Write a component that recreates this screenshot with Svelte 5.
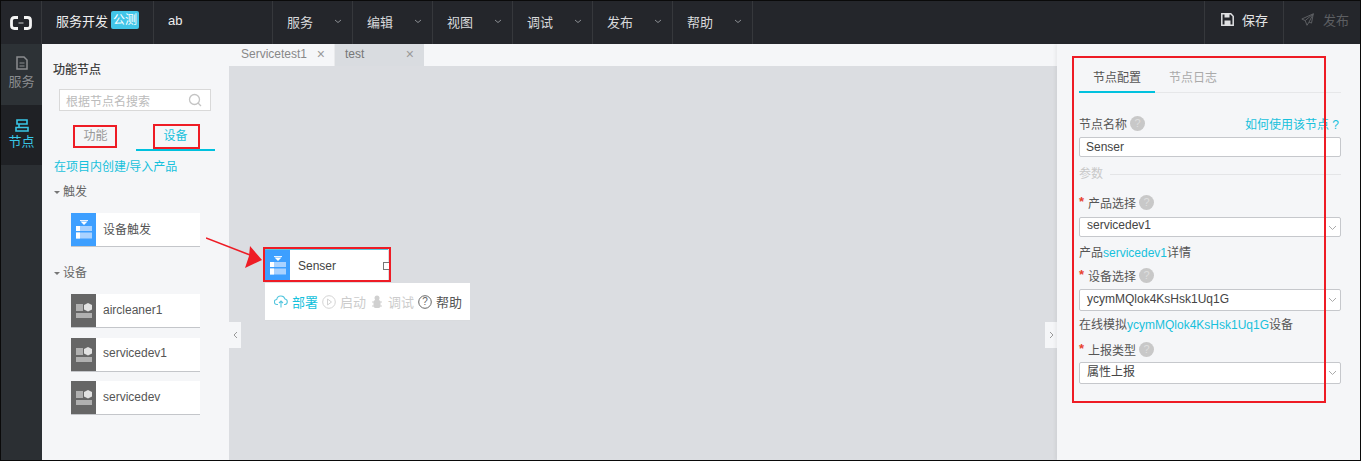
<script>
  const menus = ["服务", "编辑", "视图", "调试", "发布", "帮助"];
  const devices = ["aircleaner1", "servicedev1", "servicedev"];
</script>

{#snippet triggerIcon()}
  <svg width="16" height="19" viewBox="0 0 16 19">
    <rect x="4" y="0" width="8" height="1" fill="#e8f2ff" />
    <path d="M4.500 1.500h7L8 5z" fill="#fff" />
    <rect x="0" y="6" width="16" height="5" fill="#a9d2ff" />
    <rect x="0" y="12.500" width="16" height="6" fill="#a9d2ff" />
    <rect x="0" y="6" width="4" height="5" fill="#fff" />
    <rect x="0" y="12.500" width="4" height="6" fill="#fff" />
  </svg>
{/snippet}

{#snippet deviceIcon()}
  <svg width="16" height="15" viewBox="0 0 16 15">
    <rect x="0" y="1" width="7" height="7" fill="#b0b0b0" />
    <path d="M12 0l4 2v4.500l-4 2-4-2V2z" fill="#e2e2e2" />
    <rect x="0" y="10" width="16" height="5" fill="#b0b0b0" />
  </svg>
{/snippet}

{#snippet help()}
  <span class="help">?</span>
{/snippet}

{#snippet chevron()}
  <svg class="sel-arrow" width="9" height="6" viewBox="0 0 9 6"><path d="M1 1l3.500 3.500L8 1" fill="none" stroke="#aaa" /></svg>
{/snippet}

<div class="page">
  <header class="topbar">
    <div class="logo">
      <svg width="22" height="14" viewBox="0 0 22 14">
        <path d="M8 1.500H4.500Q1.500 1.500 1.500 4.500v5q0 3 3 3H8M14 1.500h3.500q3 0 3 3v5q0 3-3 3H14" fill="none" stroke="#f4f4f4" stroke-width="2.800" />
        <rect x="8.500" y="6.200" width="5" height="1.600" fill="#8d8f92" />
      </svg>
    </div>
    <div class="brand"><span>服务开发</span><span class="beta">公测</span></div>
    <div class="project">ab</div>
    <nav class="menus">
      {#each menus as m}
        <div class="menu">
          <span>{m}</span>
          <svg width="8" height="5" viewBox="0 0 8 5"><path d="M1 1l3 2.500L7 1" fill="none" stroke="#8a8d92" /></svg>
        </div>
      {/each}
    </nav>
    <div class="action save">
      <svg width="13" height="13" viewBox="0 0 13 13">
        <path d="M.8.800h9l2.400 2.400v9H.8z" fill="none" stroke="#dfe0e2" stroke-width="1.500" />
        <rect x="3.500" y="1" width="5" height="3.500" fill="#dfe0e2" />
        <rect x="3.500" y="7.500" width="6" height="4.500" fill="#dfe0e2" />
      </svg>
      <span>保存</span>
    </div>
    <div class="action publish">
      <svg width="13" height="13" viewBox="0 0 13 13"><path d="M12.300.8L.8 6l3.400 1.600L6 12.300l2-3.200 2.500 1z M12.300.8L4.200 7.600 M12.300.8L8 9.100" fill="none" stroke="#5c5e62" /></svg>
      <span>发布</span>
    </div>
  </header>

  <div class="body">
    <aside class="rail">
      <div class="rail-item">
        <svg width="12" height="14" viewBox="0 0 12 14">
          <path d="M1 1h7l3 3v9H1z" fill="none" stroke="#8a8c8f" stroke-width="1.500" />
          <path d="M3.500 7h5M3.500 10h5" stroke="#8a8c8f" />
        </svg>
        <span>服务</span>
      </div>
      <div class="rail-item active">
        <svg width="14" height="13" viewBox="0 0 14 13">
          <path d="M2 1h10v4H2zM1 8.500h12v3.500H1zM4 5v3.500" fill="none" stroke="#39c6e6" stroke-width="1.600" />
        </svg>
        <span>节点</span>
      </div>
    </aside>

    <section class="nodes">
      <h3>功能节点</h3>
      <div class="search">
        <span>根据节点名搜索</span>
        <svg width="14" height="14" viewBox="0 0 14 14">
          <circle cx="6.500" cy="6.500" r="5" fill="none" stroke="#c4c4c4" stroke-width="1.300" />
          <path d="M10 10l3 3" stroke="#c4c4c4" stroke-width="1.300" />
        </svg>
      </div>
      <div class="node-tabs">
        <div class="node-tab">功能</div>
        <div class="node-tab on">设备</div>
      </div>
      <a class="create">在项目内创建/导入产品</a>

      <div class="group-title first"><i></i>触发</div>
      <div class="node-card">
        <div class="card-icon blue">{@render triggerIcon()}</div>
        <span>设备触发</span>
      </div>

      <div class="group-title second"><i></i>设备</div>
      <div class="device-list">
        {#each devices as d}
          <div class="node-card">
            <div class="card-icon grey">{@render deviceIcon()}</div>
            <span>{d}</span>
          </div>
        {/each}
      </div>
    </section>

    <main class="workspace">
      <div class="tabs">
        <div class="tab current"><span>Servicetest1</span><em>×</em></div>
        <div class="tab"><span>test</span><em>×</em></div>
      </div>
      <div class="canvas">
        <div class="fold left"><svg width="5" height="8" viewBox="0 0 5 8"><path d="M4 1L1 4l3 3" fill="none" stroke="#999" /></svg></div>
        <div class="fold right"><svg width="5" height="8" viewBox="0 0 5 8"><path d="M1 1l3 3-3 3" fill="none" stroke="#999" /></svg></div>

        <div class="flow-node">
          <div class="card-icon blue">{@render triggerIcon()}</div>
          <span>Senser</span>
          <i class="port"></i>
        </div>
        <div class="node-actions">
          <span class="act on">
            <svg width="14" height="13" viewBox="0 0 14 13"><path d="M4 9.500H3a2.500 2.500 0 0 1-.3-5 4.300 4.300 0 0 1 8.300-.5A2.800 2.800 0 0 1 11 9.500h-1M7 12.500V6M5 8l2-2 2 2" fill="none" stroke="#55c6de" stroke-width="1.100" /></svg>
            部署
          </span>
          <span class="act off">
            <svg width="14" height="14" viewBox="0 0 14 14"><circle cx="7" cy="7" r="6.300" fill="none" stroke="#d4d4d4" /><path d="M5.500 4l4 3-4 3z" fill="none" stroke="#d4d4d4" /></svg>
            启动
          </span>
          <span class="act off">
            <svg width="14" height="13" viewBox="0 0 14 13"><circle cx="7" cy="3" r="2.500" fill="#d0d0d0" /><rect x="3.500" y="5" width="7" height="8" rx="2" fill="#d0d0d0" /><path d="M2 7h10M2 11h10" stroke="#d0d0d0" /></svg>
            调试
          </span>
          <span class="act">
            <svg width="14" height="14" viewBox="0 0 14 14"><circle cx="7" cy="7" r="6.300" fill="none" stroke="#666" /><text x="7" y="10.300" text-anchor="middle" font-size="10" fill="#666" font-family="Liberation Sans">?</text></svg>
            帮助
          </span>
        </div>
      </div>
    </main>

    <aside class="config">
      <div class="config-tabs">
        <div class="config-tab on">节点配置</div>
        <div class="config-tab">节点日志</div>
      </div>

      <div class="label-row name-row">
        <label>节点名称</label>{@render help()}
        <a class="howto">如何使用该节点 ?</a>
      </div>
      <div class="input name">Senser</div>

      <div class="divider"><span>参数</span><hr /></div>

      <div class="label-row product"><b>*</b><label>产品选择</label>{@render help()}</div>
      <div class="input select product-select">servicedev1{@render chevron()}</div>
      <p class="hint product-hint">产品<a>servicedev1</a>详情</p>

      <div class="label-row device"><b>*</b><label>设备选择</label>{@render help()}</div>
      <div class="input select device-select">ycymMQlok4KsHsk1Uq1G{@render chevron()}</div>
      <p class="hint device-hint">在线模拟<a>ycymMQlok4KsHsk1Uq1G</a>设备</p>

      <div class="label-row report"><b>*</b><label>上报类型</label>{@render help()}</div>
      <div class="input select report-select">属性上报{@render chevron()}</div>
    </aside>
  </div>

  <!-- red annotations drawn over the screenshot -->
  <i class="mark m1"></i>
  <i class="mark m2"></i>
  <i class="mark m3"></i>
  <i class="mark m4"></i>
  <svg class="arrow" width="62" height="34" viewBox="0 0 62 34">
    <path d="M0 1L44 18" stroke="#ee1c25" stroke-width="1.500" />
    <path d="M56 23L39 31L43 19L44 9z" fill="#ee1c25" />
  </svg>
</div>

<style>
  :global(body) {
    margin: 0;
    background: #fff;
  }

  .page {
    position: relative;
    width: 1361px;
    height: 461px;
    box-sizing: border-box;
    border: 1px solid #0a0a0a;
    display: flex;
    flex-direction: column;
    overflow: hidden;
    font-family: "Liberation Sans", "Noto Sans CJK SC", sans-serif;
    font-size: 12px;
    color: #555;
  }

  .topbar {
    height: 43px;
    flex: none;
    display: flex;
    background: #24262b;
    color: #d8d9db;
  }

  .logo {
    width: 40px;
    display: flex;
    align-items: center;
    justify-content: center;
    border-right: 1px solid #36383c;
  }

  .brand {
    width: 112px;
    box-sizing: border-box;
    padding: 0 0 5px 14px;
    display: flex;
    align-items: center;
    gap: 3px;
    font-size: 13px;
    color: #eee;
    border-right: 1px solid #36383c;
  }

  .beta {
    background: #42c5e8;
    color: #fff;
    font-size: 12px;
    line-height: 18px;
    padding: 0 2px;
    border-radius: 2px;
  }

  .project {
    width: 119px;
    box-sizing: border-box;
    padding: 0 0 4px 14px;
    display: flex;
    align-items: center;
    color: #eee;
    font-size: 13px;
    border-right: 1px solid #36383c;
  }

  .menus {
    display: flex;
    flex: 1;
  }

  .menu {
    width: 80px;
    box-sizing: border-box;
    padding: 0 10px 3px 14px;
    display: flex;
    align-items: center;
    justify-content: space-between;
    font-size: 13px;
    border-right: 1px solid #36383c;
  }

  .action {
    width: 80px;
    box-sizing: border-box;
    padding: 0 0 6px 17px;
    display: flex;
    align-items: center;
    gap: 9px;
    font-size: 13px;
  }

  .save {
    border-left: 1px solid #36383c;
    border-right: 1px solid #36383c;
    padding-left: 16px;
    gap: 8px;
    color: #e4e5e6;
  }

  .publish {
    width: 76px;
    color: #5c5e62;
  }

  .body {
    flex: 1;
    display: flex;
    min-height: 0;
  }

  .rail {
    width: 41px;
    flex: none;
    display: flex;
    flex-direction: column;
    background: #2b2f33;
  }

  .rail-item {
    height: 61px;
    box-sizing: border-box;
    padding-top: 12px;
    display: flex;
    flex-direction: column;
    align-items: center;
    gap: 4px;
    background: #2d3236;
    color: #8a8c8f;
    font-size: 13px;
    line-height: 16px;
  }

  .rail-item.active {
    height: 60px;
    padding-top: 14px;
    gap: 2px;
    background: #1f2125;
    color: #39c6e6;
  }

  .nodes {
    width: 187px;
    flex: none;
    box-sizing: border-box;
    background: #f5f6f8;
    padding-top: 17px;
  }

  h3 {
    margin: 0 0 0 11px;
    font-size: 12px;
    line-height: 18px;
    font-weight: normal;
    color: #333;
    -webkit-text-stroke: 0.2px #333;
  }

  .search {
    margin: 10px 18px 0 17px;
    height: 22px;
    box-sizing: border-box;
    border: 1px solid #d9d9d9;
    background: #fff;
    padding: 0 8px 0 6px;
    display: flex;
    align-items: center;
    justify-content: space-between;
    color: #bbb;
  }

  .node-tabs {
    margin: 11px 14px 0 15px;
    display: flex;
  }

  .node-tab {
    width: 79px;
    height: 27px;
    line-height: 29px;
    text-align: center;
    color: #999;
    border-bottom: 2px solid transparent;
  }

  .node-tab:first-child {
    text-indent: -2px;
  }

  .node-tab.on {
    color: #17c1dc;
    border-bottom-color: #00c1de;
  }

  .create {
    display: block;
    margin: 8px 0 0 12px;
    color: #17c1dc;
    line-height: 17px;
  }

  .group-title {
    margin-left: 12px;
    line-height: 18px;
    color: #666;
    display: flex;
    align-items: center;
  }

  .group-title i {
    width: 0;
    height: 0;
    border: 3px solid transparent;
    border-top: 3.500px solid #777;
    border-bottom: 0;
    margin-right: 3px;
  }

  .group-title.first {
    margin-top: 7px;
  }

  .group-title.second {
    margin-top: 17px;
  }

  .node-card {
    margin: 9.500px 0 0 29px;
    width: 129px;
    height: 33px;
    background: #fff;
    border-bottom: 1px solid #c4c6ca;
    display: flex;
    align-items: center;
    gap: 7px;
    color: #555;
  }

  .node-card span {
    padding-bottom: 2px;
  }

  .group-title.first + .node-card,
  .device-list .node-card:first-child {
    margin-top: 12px;
  }

  .card-icon {
    width: 25px;
    height: 100%;
    flex: none;
    display: flex;
    align-items: center;
    justify-content: center;
  }

  .blue {
    background: #3d9fff;
  }

  .grey {
    background: #666;
  }

  .workspace {
    flex: 1;
    display: flex;
    flex-direction: column;
    min-width: 0;
  }

  .tabs {
    height: 22px;
    flex: none;
    display: flex;
    background: #f5f6f8;
  }

  .tab {
    width: 89px;
    box-sizing: border-box;
    padding: 0 10px 2px 10px;
    display: flex;
    align-items: center;
    justify-content: space-between;
    background: #d9dce0;
    color: #777;
  }

  .tab.current {
    width: 106px;
    padding-left: 12px;
    padding-right: 9px;
    background: #f5f6f8;
    color: #888;
    border-right: 1px solid #e9eaec;
  }

  .tab em {
    font-style: normal;
    font-size: 14px;
    color: #999;
  }

  .canvas {
    position: relative;
    flex: 1;
    background: #dbdde1;
  }

  .fold {
    position: absolute;
    top: 256px;
    width: 12px;
    height: 26px;
    background: #f5f6f8;
    display: flex;
    align-items: center;
    justify-content: center;
  }

  .fold.left {
    left: 0;
  }

  .fold.right {
    right: 0;
  }

  .flow-node {
    position: absolute;
    left: 36px;
    top: 183px;
    width: 123px;
    height: 31px;
    background: #fff;
    border-top: 1px solid #55c6de;
    border-bottom: 1px solid #55c6de;
    display: flex;
    align-items: center;
    gap: 8px;
    color: #444;
  }

  .port {
    position: absolute;
    right: -3px;
    top: 12px;
    width: 6px;
    height: 6px;
    border: 1px solid #777;
    background: #fff;
  }

  .node-actions {
    position: absolute;
    left: 36px;
    top: 217px;
    width: 205px;
    height: 38px;
    box-sizing: border-box;
    padding: 0 9px;
    background: #fff;
    border-bottom: 1px solid #d9dbde;
    display: flex;
    align-items: center;
    gap: 4px;
    font-size: 13px;
  }

  .act {
    display: flex;
    align-items: center;
    gap: 4px;
    color: #555;
    white-space: nowrap;
  }

  .act.on {
    color: #17c1dc;
  }

  .act.off {
    color: #ccc;
  }

  .config {
    width: 303px;
    flex: none;
    box-sizing: border-box;
    background: #f5f6f8;
    padding: 15px 19px 0 22px;
    box-shadow: -2px 0 3px rgba(0, 0, 0, 0.05);
    position: relative;
  }

  .config-tabs {
    display: flex;
    height: 33px;
    border-bottom: 1px solid #e6e7e9;
  }

  .config-tab {
    width: 76px;
    height: 34px;
    box-sizing: border-box;
    line-height: 38px;
    text-align: center;
    color: #aaa;
  }

  .config-tab.on {
    color: #555;
    border-bottom: 2px solid #00c1de;
  }

  .label-row {
    display: flex;
    align-items: center;
    height: 18px;
    color: #555;
  }

  .label-row b {
    color: #e8432e;
    font-weight: bold;
    width: 9px;
    font-size: 13px;
    line-height: 18px;
  }

  .name-row {
    margin-top: 21px;
  }

  .product {
    margin-top: 10px;
  }

  .device {
    margin-top: 4px;
  }

  .report {
    margin-top: 6px;
  }

  .howto {
    margin-left: auto;
    margin-right: 2px;
    color: #17c1dc;
  }

  .help {
    width: 15px;
    height: 15px;
    margin-left: 3px;
    border-radius: 50%;
    background: #c8c8c8;
    color: #dedede;
    font-size: 11px;
    line-height: 15px;
    text-align: center;
  }

  .input {
    height: 20px;
    box-sizing: border-box;
    border: 1px solid #c6c8cc;
    border-radius: 2px;
    background: #fff;
    padding: 0 7px;
    color: #444;
    position: relative;
  }

  .name {
    margin-top: 5px;
    padding: 0 6px;
    line-height: 18px;
  }

  .product-select {
    margin-top: 6px;
    line-height: 15px;
  }

  .device-select {
    margin-top: 5px;
    height: 22px;
    line-height: 19px;
  }

  .report-select {
    margin-top: 4px;
    height: 22px;
    line-height: 18px;
  }

  .sel-arrow {
    position: absolute;
    right: 3px;
    top: 7px;
  }

  .divider {
    display: flex;
    align-items: center;
    gap: 7px;
    margin-top: 8px;
    color: #c8c8c8;
    line-height: 18px;
  }

  .divider hr {
    flex: 1;
    border: 0;
    border-top: 1px solid #e4e5e7;
    margin: 0;
  }

  .hint {
    margin: 0;
    line-height: 18px;
    color: #555;
  }

  .product-hint {
    margin-top: 7px;
  }

  .device-hint {
    margin-top: 5px;
  }

  .hint a {
    color: #17c1dc;
  }

  .mark {
    position: absolute;
    box-sizing: border-box;
    border: 2px solid #ee1c25;
    pointer-events: none;
  }

  .m1 {
    left: 72px;
    top: 124px;
    width: 44px;
    height: 23px;
  }

  .m2 {
    left: 152px;
    top: 123px;
    width: 47px;
    height: 25px;
  }

  .m3 {
    left: 262px;
    top: 246px;
    width: 128px;
    height: 35px;
  }

  .m4 {
    left: 1071px;
    top: 55px;
    width: 254px;
    height: 347px;
  }

  .arrow {
    position: absolute;
    left: 205px;
    top: 236px;
  }
</style>
